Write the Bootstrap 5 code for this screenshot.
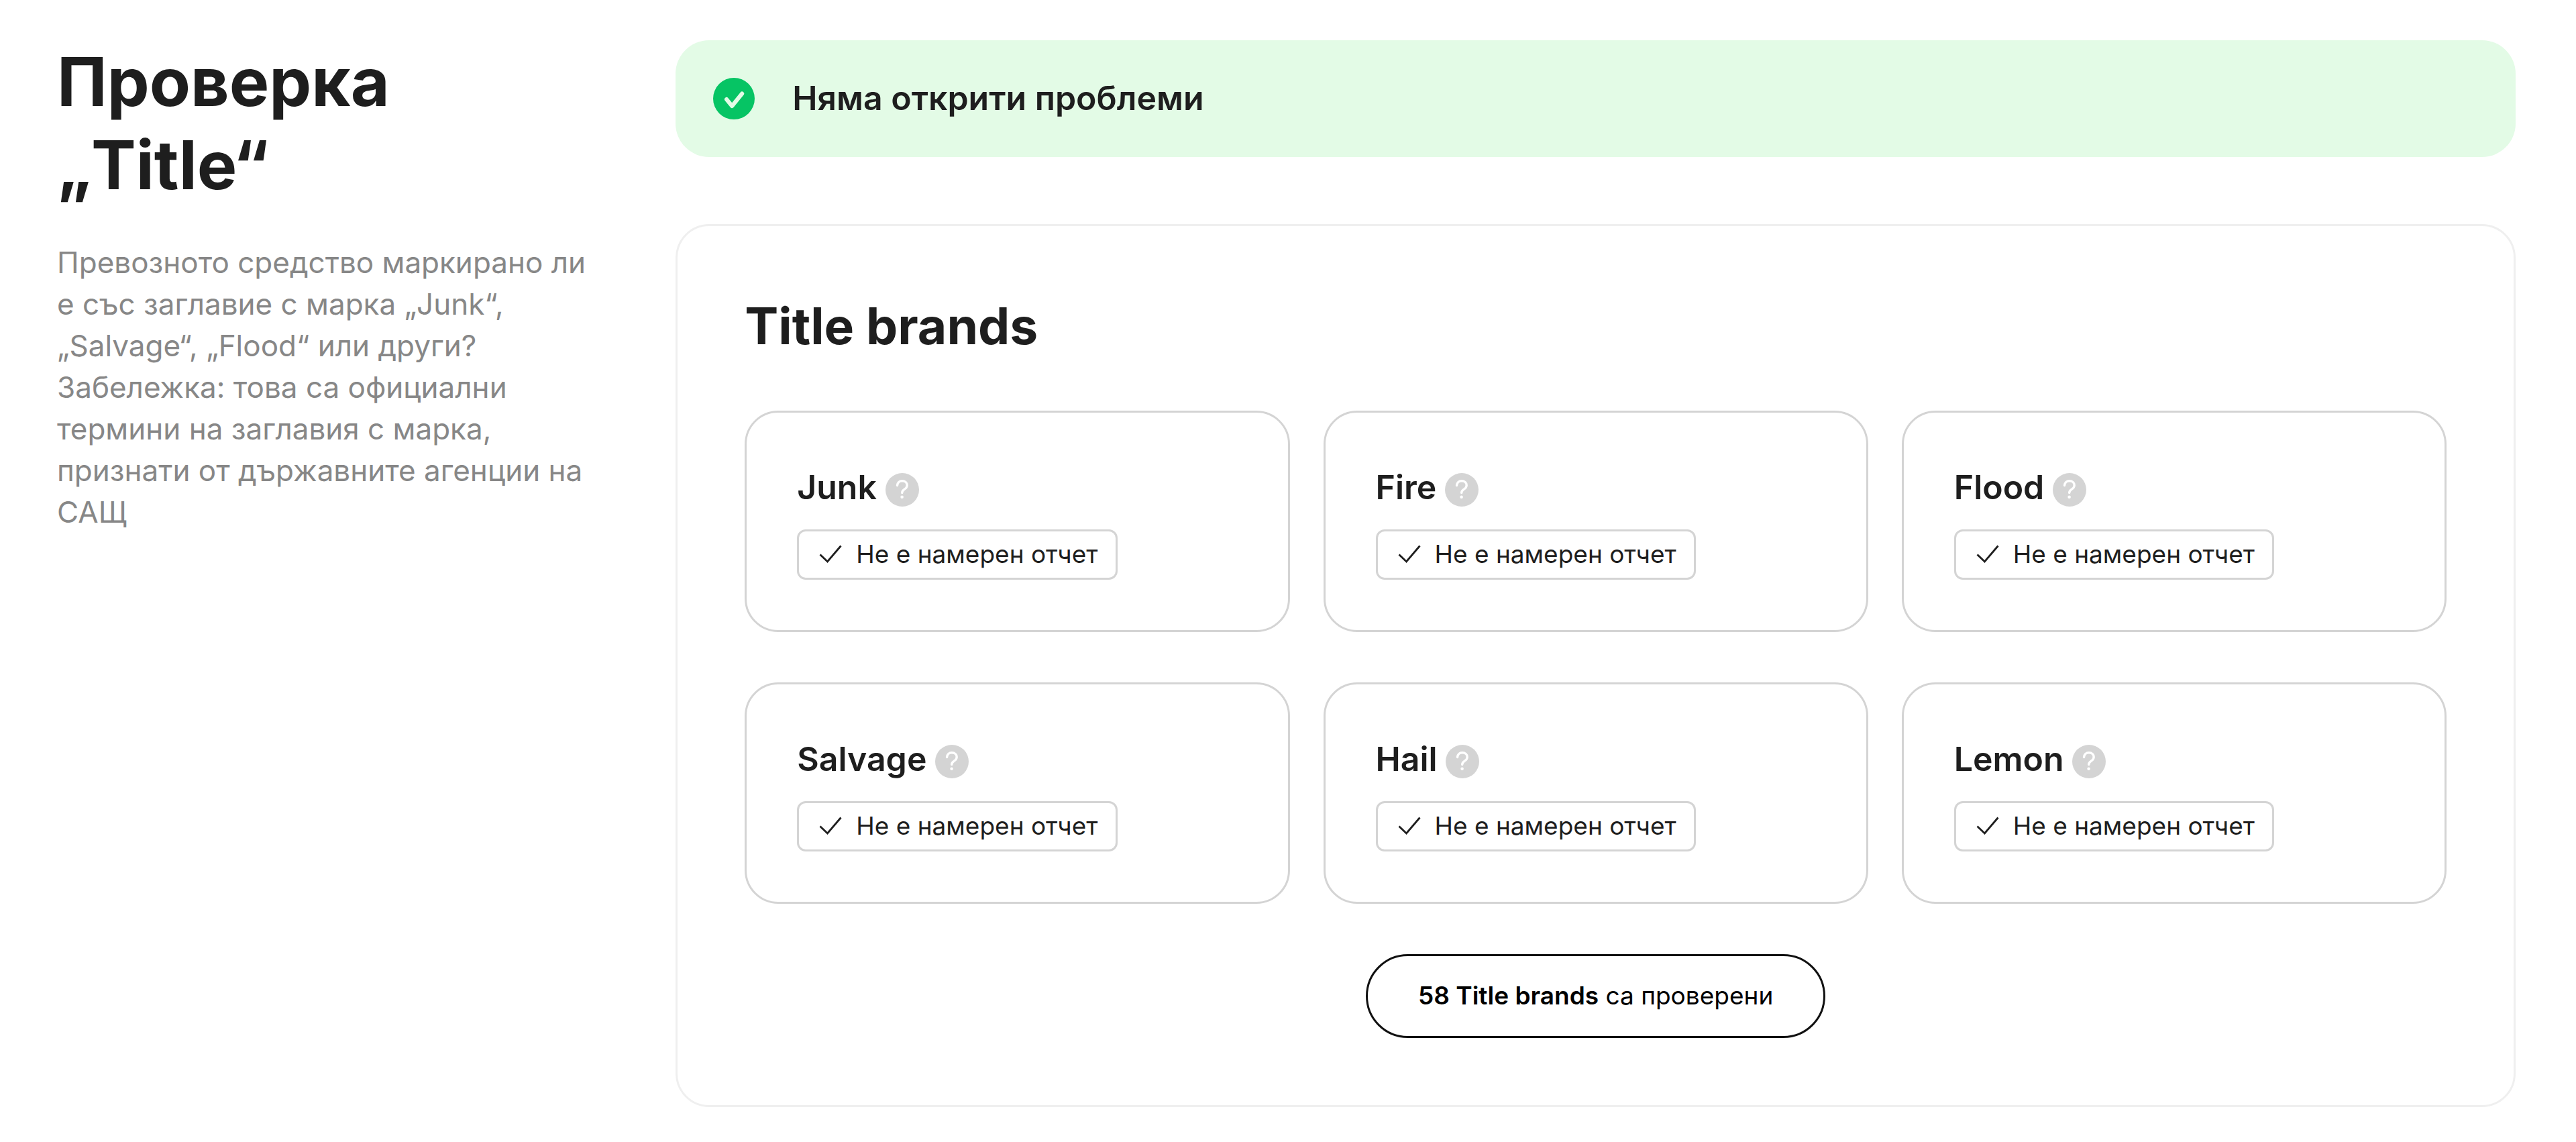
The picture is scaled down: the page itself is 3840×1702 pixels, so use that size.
<!DOCTYPE html>
<html lang="bg">
<head>
<meta charset="utf-8">
<meta name="viewport" content="width=device-width, initial-scale=1">
<title>Проверка „Title“</title>
<link href="https://cdn.jsdelivr.net/npm/bootstrap@5.3.0/dist/css/bootstrap.min.css" rel="stylesheet">
<style>
  body { font-family: Inter, "Open Sans", sans-serif; color: #1e1e1e; background: #fff; }
  .report { --bs-gutter-x: 25px; padding: 60px 90px 50px 85px; }
  .report-title { font-size: 100px; line-height: 124px; font-weight: 700; margin-bottom: 52px; }
  .report-note { font-size: 44px; line-height: 62px; color: #878787; }
  .report-intro { padding-right: 100px; }
  .status-bar { background: #e3fbe6; border-radius: 50px; padding: 50px 56px; gap: 56px; margin-bottom: 100px; font-size: 50px; line-height: 72px; font-weight: 600; }
  .status-bar span { padding-bottom: 2px; }
  .status-bar svg { width: 62px; height: 62px; }
  .panel { border: 3px solid #efefef; border-radius: 50px; padding: 100px; }
  .panel-title { font-size: 75px; line-height: 98px; font-weight: 700; margin-bottom: 77px; }
  .brands { --bs-gutter-x: 50px; --bs-gutter-y: 75px; }
  .brand-box { border: 3px solid #d4d4d4; border-radius: 50px; padding: 75px; }
  .brand-name { font-size: 50px; line-height: 72px; font-weight: 600; margin-bottom: 27px; }
  .help { width: 50px; height: 50px; vertical-align: middle; }
  .help svg { width: 50px; height: 50px; }
  .chip { border: 3px solid #d4d4d4; border-radius: 13px; padding: 9px 26px 11px 30px; gap: 21px; font-size: 37px; line-height: 49px; }
  .chip svg { width: 34px; height: 28px; }
  .counter { border: 3px solid #111; border-radius: 63px; padding: 34px 75px 36px; margin-top: 75px; font-size: 37px; line-height: 49px; color: #000; }
</style>
</head>
<body>
<svg class="d-none" xmlns="http://www.w3.org/2000/svg">
  <symbol id="i-help" viewBox="0 0 50 50"><circle cx="25" cy="25" r="25" fill="#d4d4d4"/><path d="M17.500 18.500c.4-4 3.300-6.800 7.300-6.800 4.300 0 7.400 2.700 7.400 6.500 0 2.900-1.500 4.400-3.900 6-2.500 1.600-3.600 2.900-3.600 5.300" fill="none" stroke="#fff" stroke-width="3.400" stroke-linecap="round"/><circle cx="24.600" cy="35.700" r="2.300" fill="#fff"/></symbol>
  <symbol id="i-tick" viewBox="0 0 34 28"><path d="M1.500 14.500 12.500 25 32.500 1.500" fill="none" stroke="#1e1e1e" stroke-width="2.800"/></symbol>
</svg>
<main class="container-fluid report">
  <div class="row">
    <section class="col-12 col-lg-3">
      <div class="report-intro">
        <h1 class="report-title">Проверка „Title“</h1>
        <p class="report-note mb-0">Превозното средство маркирано ли е със заглавие с марка „Junk“, „Salvage“, „Flood“ или други? Забележка: това са официални термини на заглавия с марка, признати от държавните агенции на САЩ</p>
      </div>
    </section>
    <section class="col-12 col-lg-9">
      <div class="status-bar d-flex align-items-center" role="status">
        <svg class="flex-shrink-0" viewBox="0 0 62 62" aria-hidden="true"><circle cx="31" cy="31" r="31" fill="#06c464"/><path d="M20 32 28.200 42 43.200 23.500" fill="none" stroke="#e3fbe6" stroke-width="6" stroke-linecap="round" stroke-linejoin="round"/></svg>
        <span>Няма открити проблеми</span>
      </div>
      <div class="panel">
        <h2 class="panel-title">Title brands</h2>
        <div class="row row-cols-1 row-cols-md-3 brands">
          <div class="col"><div class="brand-box"><h3 class="brand-name">Junk <button type="button" class="help btn p-0 border-0 rounded-circle d-inline-flex" aria-label="Junk"><svg><use href="#i-help"/></svg></button></h3><div class="chip d-inline-flex align-items-center"><svg><use href="#i-tick"/></svg><span>Не е намерен отчет</span></div></div></div>
          <div class="col"><div class="brand-box"><h3 class="brand-name">Fire <button type="button" class="help btn p-0 border-0 rounded-circle d-inline-flex" aria-label="Fire"><svg><use href="#i-help"/></svg></button></h3><div class="chip d-inline-flex align-items-center"><svg><use href="#i-tick"/></svg><span>Не е намерен отчет</span></div></div></div>
          <div class="col"><div class="brand-box"><h3 class="brand-name">Flood <button type="button" class="help btn p-0 border-0 rounded-circle d-inline-flex" aria-label="Flood"><svg><use href="#i-help"/></svg></button></h3><div class="chip d-inline-flex align-items-center"><svg><use href="#i-tick"/></svg><span>Не е намерен отчет</span></div></div></div>
          <div class="col"><div class="brand-box"><h3 class="brand-name">Salvage <button type="button" class="help btn p-0 border-0 rounded-circle d-inline-flex" aria-label="Salvage"><svg><use href="#i-help"/></svg></button></h3><div class="chip d-inline-flex align-items-center"><svg><use href="#i-tick"/></svg><span>Не е намерен отчет</span></div></div></div>
          <div class="col"><div class="brand-box"><h3 class="brand-name">Hail <button type="button" class="help btn p-0 border-0 rounded-circle d-inline-flex" aria-label="Hail"><svg><use href="#i-help"/></svg></button></h3><div class="chip d-inline-flex align-items-center"><svg><use href="#i-tick"/></svg><span>Не е намерен отчет</span></div></div></div>
          <div class="col"><div class="brand-box"><h3 class="brand-name">Lemon <button type="button" class="help btn p-0 border-0 rounded-circle d-inline-flex" aria-label="Lemon"><svg><use href="#i-help"/></svg></button></h3><div class="chip d-inline-flex align-items-center"><svg><use href="#i-tick"/></svg><span>Не е намерен отчет</span></div></div></div>
        </div>
        <div class="d-flex justify-content-center">
          <div class="counter"><span class="fw-semibold">58 Title brands</span> са проверени</div>
        </div>
      </div>
    </section>
  </div>
</main>
<script src="https://cdn.jsdelivr.net/npm/bootstrap@5.3.0/dist/js/bootstrap.bundle.min.js"></script>
</body>
</html>
